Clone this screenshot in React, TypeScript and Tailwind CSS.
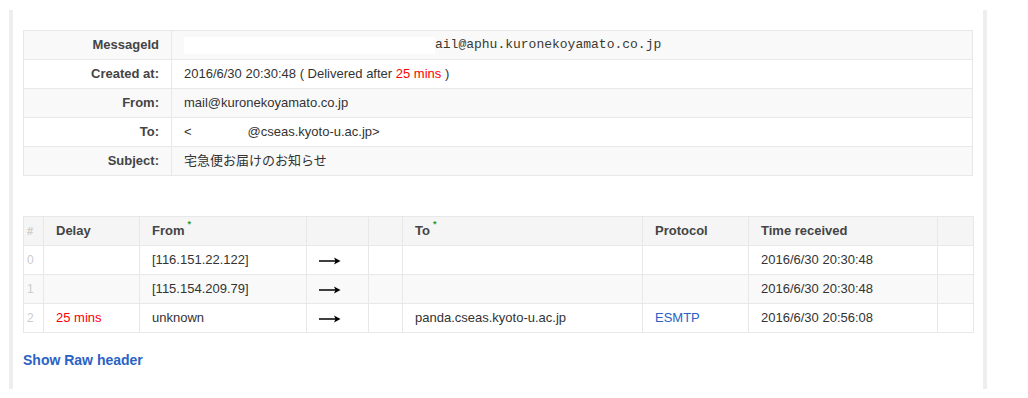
import React from "react";

const font = { fontFamily: '"Liberation Sans", Arial, "Noto Sans CJK JP", sans-serif' };

const headerRows: { label: string; bg: string; value: React.ReactNode }[] = [
  {
    label: "MessageId",
    bg: "bg-[#f9f9f9]",
    value: (
      <span className="flex items-center">
        <span className="inline-block w-[251px] h-[17px] bg-white" />
        <span className="text-[13px] text-[#3a3a32]" style={{ fontFamily: '"Liberation Mono", "Courier New", monospace' }}>
          ail@aphu.kuronekoyamato.co.jp
        </span>
      </span>
    ),
  },
  {
    label: "Created at:",
    bg: "bg-white",
    value: (
      <span>
        2016/6/30 20:30:48 ( Delivered after <span className="text-[#f00]">25 mins</span> )
      </span>
    ),
  },
  { label: "From:", bg: "bg-[#f9f9f9]", value: "mail@kuronekoyamato.co.jp" },
  {
    label: "To:",
    bg: "bg-white",
    value: (
      <span className="flex items-center">
        <span>&lt;</span>
        <span className="inline-block w-[56px]" />
        <span>@cseas.kyoto-u.ac.jp&gt;</span>
      </span>
    ),
  },
  { label: "Subject:", bg: "bg-[#f9f9f9]", value: "宅急便お届けのお知らせ" },
];

const hops = [
  { n: "0", delay: "", from: "[116.151.22.122]", to: "", proto: "", time: "2016/6/30 20:30:48", bg: "bg-white" },
  { n: "1", delay: "", from: "[115.154.209.79]", to: "", proto: "", time: "2016/6/30 20:30:48", bg: "bg-[#f9f9f9]" },
  { n: "2", delay: "25 mins", from: "unknown", to: "panda.cseas.kyoto-u.ac.jp", proto: "ESMTP", time: "2016/6/30 20:56:08", bg: "bg-white" },
];

function Arrow() {
  return (
    <svg width="22" height="10" viewBox="0 0 22 10" className="inline-block">
      <path d="M0 5 H17" stroke="#000" strokeWidth="1.5" />
      <path d="M15 1.5 L21.5 5 L15 8.5 L16.5 5 Z" fill="#000" />
    </svg>
  );
}

const td = "border border-[#e8e8e8] px-3 h-[29px] align-middle";
const star = "text-[#2a9a2a] text-[9px] ml-[3px] relative -top-[8px]";

export default function App() {
  return (
    <div className="bg-white w-[1028px] h-[398px] pt-[10px]" style={font}>
      <div className="ml-[9px] w-[978px] h-[379px] border-l-4 border-r-4 border-[#eeeeee] pl-[10px] pt-[20px] text-[13px] text-[#333]">
        <table className="w-[950px] table-fixed border-collapse">
          <colgroup>
            <col className="w-[148px]" />
            <col />
          </colgroup>
          <tbody>
            {headerRows.map((r) => (
              <tr key={r.label} className={r.bg}>
                <td className={`${td} text-right font-bold text-[#444]`}>{r.label}</td>
                <td className={td}>{r.value}</td>
              </tr>
            ))}
          </tbody>
        </table>

        <table className="w-[950px] table-fixed border-collapse mt-[40px]">
          <colgroup>
            <col className="w-[20px]" />
            <col className="w-[96px]" />
            <col className="w-[167px]" />
            <col className="w-[62px]" />
            <col className="w-[34px]" />
            <col className="w-[240px]" />
            <col className="w-[106px]" />
            <col className="w-[189px]" />
            <col className="w-[36px]" />
          </colgroup>
          <thead>
            <tr className="bg-[#f5f5f5] font-bold text-[#444] text-left">
              <th className={`${td} px-[3px] text-[#ccc] font-bold text-[11px]`}>#</th>
              <th className={td}>Delay</th>
              <th className={td}>
                From<sup className={star}>*</sup>
              </th>
              <th className={td}></th>
              <th className={td}></th>
              <th className={td}>
                To<sup className={star}>*</sup>
              </th>
              <th className={td}>Protocol</th>
              <th className={td}>Time received</th>
              <th className={td}></th>
            </tr>
          </thead>
          <tbody>
            {hops.map((h) => (
              <tr key={h.n} className={h.bg}>
                <td className={`${td} px-[3px] text-[#ccc] text-[12px]`}>{h.n}</td>
                <td className={`${td} text-[#f00]`}>{h.delay}</td>
                <td className={td}>{h.from}</td>
                <td className={td}>
                  <Arrow />
                </td>
                <td className={td}></td>
                <td className={td}>{h.to}</td>
                <td className={`${td} text-[#2b62c4]`}>{h.proto}</td>
                <td className={td}>{h.time}</td>
                <td className={td}></td>
              </tr>
            ))}
          </tbody>
        </table>

        <div className="mt-[17px] text-[14px] font-bold text-[#2b62c4]">Show Raw header</div>
      </div>
    </div>
  );
}
